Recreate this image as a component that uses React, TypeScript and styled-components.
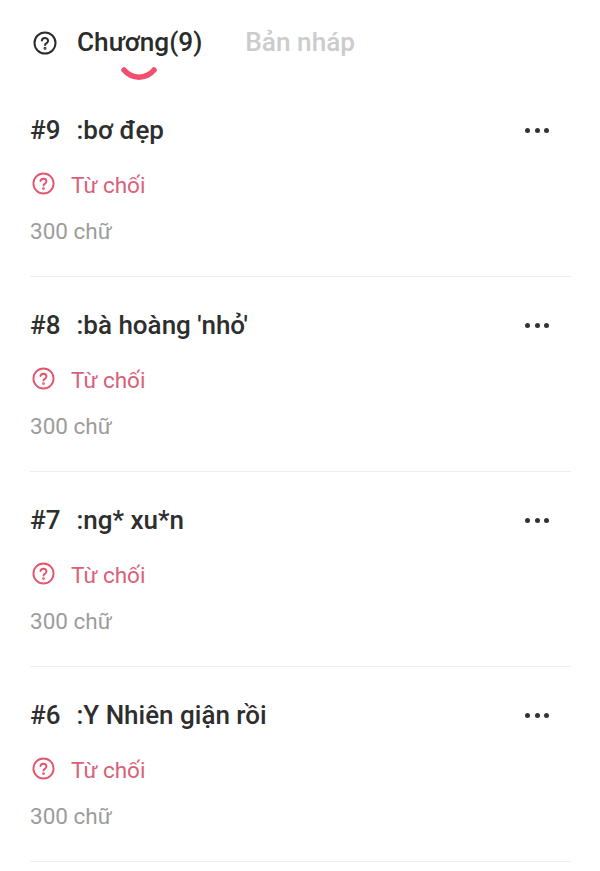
import styled, { createGlobalStyle } from 'styled-components';

const GlobalStyle = createGlobalStyle`
  html, body {
    margin: 0;
    padding: 0;
    background-color: #fff;
    font-family: Roboto, 'Noto Sans', sans-serif;
  }
`;

const Page = styled.div`
  width: 600px;
  height: 871px;
  overflow: hidden;
  box-sizing: border-box;
  padding: 0 29px 0 30px;
`;

const TabBar = styled.div`
  height: 82px;
  display: flex;
  align-items: flex-start;
  padding: 26px 0 0 3px;
  box-sizing: border-box;
`;

const HelpButton = styled.div`
  width: 24px;
  height: 34px;
  display: flex;
  align-items: center;
  margin-right: 20px;
  color: #2b2b2b;
`;

const Tab = styled.div<{ $active?: boolean }>`
  position: relative;
  font-size: 26.2px;
  line-height: 32px;
  font-weight: 500;
  color: ${({ $active }) => ($active ? '#2b2b2b' : '#cccccc')};
  margin-right: 43px;
  white-space: nowrap;
`;

const Smile = styled.svg`
  position: absolute;
  left: 44px;
  top: 41px;
`;

const ChapterRow = styled.div`
  height: 195px;
  padding-top: 31px;
  border-bottom: 1px solid #eeeeee;
  box-sizing: border-box;
`;

const TitleLine = styled.div`
  display: flex;
  align-items: center;
  justify-content: space-between;
  height: 34px;
  padding-right: 22px;
`;

const Title = styled.div`
  display: flex;
  font-size: 26px;
  font-weight: 500;
  color: #2e2e2e;
  white-space: nowrap;
`;

const ChapterNumber = styled.span`
  margin-right: 16px;
`;

const MoreDots = styled.div`
  display: flex;
  gap: 4.5px;
`;

const Dot = styled.span`
  width: 5px;
  height: 5px;
  border-radius: 50%;
  background-color: #333;
`;

const StatusLine = styled.div`
  display: flex;
  align-items: center;
  height: 30px;
  margin-top: 23px;
  padding-left: 2px;
  color: #e4566f;
`;

const StatusIcon = styled.span`
  display: flex;
  margin-bottom: 4px;
`;

const StatusText = styled.span`
  font-size: 22.5px;
  margin-left: 16px;
  color: #d9607a;
`;

const WordCount = styled.div`
  font-size: 22.5px;
  line-height: 30px;
  color: #9c9c9c;
  margin-top: 16px;
`;

const QuestionIcon = ({ size, strokeWidth }: { size: number; strokeWidth: number }) => (
  <svg width={size} height={size} viewBox="0 0 24 24" fill="none" stroke="currentColor" strokeWidth={strokeWidth} strokeLinecap="round" strokeLinejoin="round">
    <circle cx="12" cy="12" r="10.5" />
    <path d="M8.8 9.4a3.2 3.2 0 0 1 6.3.6c0 2-3.1 2.6-3.1 4" />
    <circle cx="12" cy="17.3" r="0.5" fill="currentColor" />
  </svg>
);

const chapters = [
  { num: '#9', title: ':bơ đẹp' },
  { num: '#8', title: ":bà hoàng 'nhỏ'" },
  { num: '#7', title: ':ng* xu*n' },
  { num: '#6', title: ':Y Nhiên giận rồi' },
];

export default function App() {
  return (
    <Page>
      <GlobalStyle />
      <TabBar>
        <HelpButton>
          <QuestionIcon size={24} strokeWidth={2} />
        </HelpButton>
        <Tab $active>
          Chương(9)
          <Smile width="36" height="14" viewBox="0 0 36 14" fill="none">
            <path d="M3 3c8 9.500 22 9.500 30 0" stroke="#f0506e" strokeWidth="5.500" strokeLinecap="round" />
          </Smile>
        </Tab>
        <Tab>Bản nháp</Tab>
      </TabBar>
      {chapters.map((chapter) => (
        <ChapterRow key={chapter.num}>
          <TitleLine>
            <Title>
              <ChapterNumber>{chapter.num}</ChapterNumber>
              {chapter.title}
            </Title>
            <MoreDots>
              <Dot />
              <Dot />
              <Dot />
            </MoreDots>
          </TitleLine>
          <StatusLine>
            <StatusIcon>
              <QuestionIcon size={23} strokeWidth={2} />
            </StatusIcon>
            <StatusText>Từ chối</StatusText>
          </StatusLine>
          <WordCount>300 chữ</WordCount>
        </ChapterRow>
      ))}
    </Page>
  );
}
